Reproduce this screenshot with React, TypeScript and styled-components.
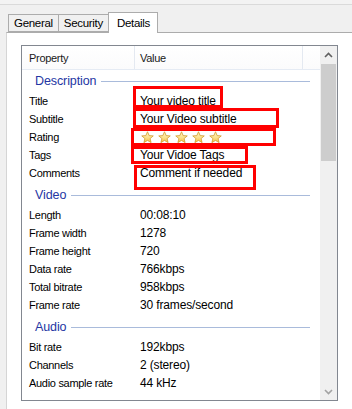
import React from "react";
import styled, { createGlobalStyle } from "styled-components";

const GlobalStyle = createGlobalStyle`
  html, body { margin: 0; padding: 0; background: #f0f0f0; }
  body { font-family: "Liberation Sans", Arial, sans-serif; }
`;

const Window = styled.div`
  position: relative;
  width: 352px;
  height: 409px;
  overflow: hidden;
  background: #f0f0f0;
  display: flex;
  flex-direction: column;
  font-family: "Liberation Sans", Arial, sans-serif;
  font-size: 11px;
  letter-spacing: -0.3px;
  color: #000;
`;

const TopStrip = styled.div`
  height: 4px;
  border-bottom: 1px solid #dadada;
  background: #f3f3f3;
`;

const TabStrip = styled.div`
  display: flex;
  align-items: flex-end;
  height: 27px;
  padding-left: 8px;
  position: relative;
  z-index: 1;
`;

const Tab = styled.div<{ $active?: boolean }>`
  box-sizing: border-box;
  height: ${(p) => (p.$active ? "21px" : "18px")};
  margin-bottom: ${(p) => (p.$active ? "-1px" : "0")};
  padding: ${(p) => (p.$active ? "3px 7px 0 8px" : "1px 5px 0 5px")};
  border: 1px solid #acacac;
  border-bottom: ${(p) => (p.$active ? "none" : "1px solid #acacac")};
  background: ${(p) => (p.$active ? "#ffffff" : "#f0f0f0")};
  & + & { margin-left: -1px; }
  color: #000;
  font-size: 11.5px;
  line-height: 14px;
  white-space: nowrap;
`;

const Panel = styled.div`
  flex: 1;
  margin-left: 6px;
  border-top: 1px solid #acacac;
  border-left: 1px solid #d5d5d5;
  background: #ffffff;
  padding: 12px 0 0 14px;
`;

const ListBox = styled.div`
  box-sizing: border-box;
  width: 317px;
  height: 356px;
  border: 1px solid #828790;
  display: flex;
  background: #fff;
`;

const ListContent = styled.div`
  width: 298px;
  overflow: hidden;
`;

const HeaderRow = styled.div`
  display: grid;
  grid-template-columns: 113px 168px 1fr;
  height: 23px;
  border-bottom: 1px solid #e5ebf4;
  background: linear-gradient(#ffffff, #fbfbfc);
  color: #1a1a1a;
`;

const HeaderCell = styled.div<{ $pad: number }>`
  display: flex;
  align-items: center;
  padding-left: ${(p) => p.$pad}px;
  border-right: 1px solid #e4e9f1;
  &:last-child { border-right: none; }
`;

const GroupHeader = styled.div<{ $first?: boolean }>`
  display: flex;
  align-items: center;
  height: 22px;
  margin-top: ${(p) => (p.$first ? "0" : "2px")};
  padding-left: 13px;
  padding-right: 10px;
  color: #2436a3;
  font-size: 12.5px;
  letter-spacing: -0.1px;
  &::after {
    content: "";
    flex: 1;
    height: 1px;
    margin-left: 5px;
    margin-top: 1px;
    background: #a9bbdb;
  }
`;

const Row = styled.div`
  display: grid;
  grid-template-columns: 113px 1fr;
  height: 18px;
  line-height: 18px;
  white-space: nowrap;
`;

const Label = styled.div`
  padding-left: 7px;
  overflow: hidden;
`;

const Value = styled.div`
  padding-left: 5px;
  display: flex;
  align-items: center;
  font-size: 12px;
  letter-spacing: -0.15px;
`;

const Stars = styled.div`
  display: flex;
  gap: 4px;
  padding-left: 1px;
`;

const ScrollBar = styled.div`
  width: 17px;
  background: #f0f0f0;
  display: flex;
  flex-direction: column;
`;

const ScrollButton = styled.div`
  height: 17px;
  display: flex;
  align-items: center;
  justify-content: center;
`;

const Thumb = styled.div`
  height: 97px;
  margin: 1px 1px 0;
  background: #cdcdcd;
`;

const Track = styled.div`
  flex: 1;
`;

const Marker = styled.div`
  position: absolute;
  box-sizing: border-box;
  border: 3px solid #ff0000;
  pointer-events: none;
`;

const Star = () => (
  <svg width="13" height="13" viewBox="0 0 26 26">
    <defs>
      <linearGradient id="sg" x1="0" y1="0" x2="0" y2="1">
        <stop offset="0" stopColor="#fff6c8" />
        <stop offset="0.55" stopColor="#fbe08a" />
        <stop offset="1" stopColor="#f3bf45" />
      </linearGradient>
    </defs>
    <path
      d="M13 1.5 L16.3 9.2 L24.5 9.8 L18.2 15.1 L20.2 23.2 L13 18.8 L5.8 23.2 L7.8 15.1 L1.5 9.8 L9.7 9.2 Z"
      fill="url(#sg)"
      stroke="#d19a2e"
      strokeWidth="1.6"
      strokeLinejoin="round"
    />
  </svg>
);

const Chevron = ({ up, color }: { up?: boolean; color: string }) => (
  <svg width="9" height="6" viewBox="0 0 9 6">
    <path
      d={up ? "M1 5 L4.5 1.5 L8 5" : "M1 1 L4.5 4.5 L8 1"}
      fill="none"
      stroke={color}
      strokeWidth="1.6"
    />
  </svg>
);

type Item = { label: string; value?: string; stars?: boolean };
type Group = { title: string; items: Item[] };

const groups: Group[] = [
  {
    title: "Description",
    items: [
      { label: "Title", value: "Your video title" },
      { label: "Subtitle", value: "Your Video subtitle" },
      { label: "Rating", stars: true },
      { label: "Tags", value: "Your Vidoe Tags" },
      { label: "Comments", value: "Comment if needed" },
    ],
  },
  {
    title: "Video",
    items: [
      { label: "Length", value: "00:08:10" },
      { label: "Frame width", value: "1278" },
      { label: "Frame height", value: "720" },
      { label: "Data rate", value: "766kbps" },
      { label: "Total bitrate", value: "958kbps" },
      { label: "Frame rate", value: "30 frames/second" },
    ],
  },
  {
    title: "Audio",
    items: [
      { label: "Bit rate", value: "192kbps" },
      { label: "Channels", value: "2 (stereo)" },
      { label: "Audio sample rate", value: "44 kHz" },
    ],
  },
  { title: "Media", items: [] },
];

const markers = [
  { left: 133, top: 86, width: 90, height: 22 },
  { left: 133, top: 108, width: 146, height: 20 },
  { left: 131, top: 128, width: 145, height: 18 },
  { left: 131, top: 146, width: 117, height: 18 },
  { left: 134, top: 165, width: 122, height: 25 },
];

export default function App() {
  return (
    <>
      <GlobalStyle />
      <Window>
        <TopStrip />
        <TabStrip>
          <Tab>General</Tab>
          <Tab>Security</Tab>
          <Tab $active>Details</Tab>
        </TabStrip>
        <Panel>
          <ListBox>
            <ListContent>
              <HeaderRow>
                <HeaderCell $pad={7}>Property</HeaderCell>
                <HeaderCell $pad={5}>Value</HeaderCell>
                <HeaderCell $pad={0} />
              </HeaderRow>
              {groups.map((g, gi) => (
                <React.Fragment key={g.title}>
                  <GroupHeader $first={gi === 0}>{g.title}</GroupHeader>
                  {g.items.map((it) => (
                    <Row key={it.label}>
                      <Label>{it.label}</Label>
                      <Value>
                        {it.stars ? (
                          <Stars>
                            {[0, 1, 2, 3, 4].map((i) => (
                              <Star key={i} />
                            ))}
                          </Stars>
                        ) : (
                          it.value
                        )}
                      </Value>
                    </Row>
                  ))}
                </React.Fragment>
              ))}
            </ListContent>
            <ScrollBar>
              <ScrollButton>
                <Chevron up color="#606060" />
              </ScrollButton>
              <Thumb />
              <Track />
              <ScrollButton>
                <Chevron color="#a3a3a3" />
              </ScrollButton>
            </ScrollBar>
          </ListBox>
        </Panel>
        {markers.map((m, i) => (
          <Marker key={i} style={m} />
        ))}
      </Window>
    </>
  );
}
